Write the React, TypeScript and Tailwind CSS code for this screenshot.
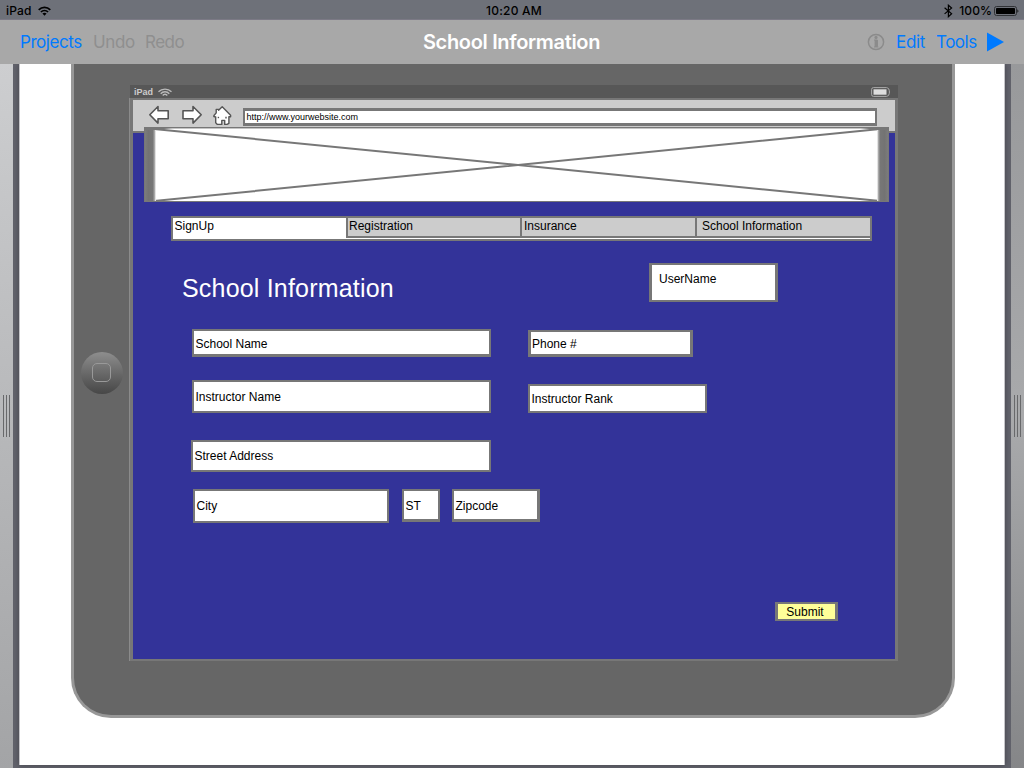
import React from "react";

function Field({ label, className, textClass = "" }: { label: string; className: string; textClass?: string }) {
  return (
    <div className={`flex shrink-0 items-center border-[#777] bg-white pl-[1.5px] text-[12px] leading-[14px] text-black ${className}`}>
      <span className={`whitespace-nowrap ${textClass}`}>{label}</span>
    </div>
  );
}

function StatusBar() {
  return (
    <div className="grid h-5 grid-cols-3 items-center border-b border-[#7b7985] bg-[#6e7179] text-[12px] font-medium leading-[18px] text-black">
      <div className="flex items-center gap-[6px] pl-[6px] pt-[2px]">
        <span className="tracking-[0.2px]">iPad</span>
        <svg width="13" height="10" viewBox="0 0 13 10" fill="none" stroke="#000" strokeWidth="1.7">
          <path d="M0.7 3.8C4 .5 9 .5 12.3 3.8M2.9 6C5 4 8 4 10.1 6" />
          <path d="M4.4 7.6C5.7 6.5 7.3 6.5 8.6 7.6L6.5 9.7Z" fill="#000" stroke="none" />
        </svg>
      </div>
      <div className="pl-[4px] pt-[2px] text-center tracking-[0.2px]">10:20 AM</div>
      <div className="flex items-center justify-end pr-[5px] pt-[2px]">
        <svg width="9" height="14" viewBox="0 0 9 14" fill="none" stroke="#000" strokeWidth="1.2">
          <path d="M.6 3.8L7.6 9.7L4.4 12.7V1.2L7.6 4L.6 9.9" />
        </svg>
        <span className="ml-[6px] tracking-[0.1px]">100%</span>
        <svg className="ml-[2px]" width="25" height="10" viewBox="0 0 25 10">
          <rect x=".5" y=".5" width="22" height="9" rx="2" fill="none" stroke="#303236" />
          <rect x="2" y="2" width="19" height="6" rx=".8" />
          <path d="M23.5 3.2Q25.2 5 23.5 6.8Z" />
        </svg>
      </div>
    </div>
  );
}

function NavBar() {
  return (
    <div className="relative z-10 grid h-11 grid-cols-[1fr_auto_1fr] items-center bg-[#a8a8a8] text-[17px] leading-5">
      <div className="flex gap-[11px] pl-5">
        <span className="w-[62px] whitespace-nowrap tracking-[-0.45px] text-[#007aff]">Projects</span>
        <span className="w-[41px] whitespace-nowrap tracking-[-0.4px] text-[#8f8f8f]">Undo</span>
        <span className="whitespace-nowrap tracking-[-0.5px] text-[#8f8f8f]">Redo</span>
      </div>
      <div className="whitespace-nowrap pr-px text-[20px] font-semibold tracking-[-0.33px] text-white">School Information</div>
      <div className="flex items-center justify-end pr-5 text-[#007aff]">
        <svg className="mb-px mr-[11px]" width="18" height="18" viewBox="0 0 18 18" fill="none" stroke="#8b8b8b">
          <circle cx="9" cy="9" r="7.6" strokeWidth="1.5" />
          <circle cx="9" cy="4.4" r="1.6" fill="#8b8b8b" stroke="none" />
          <path d="M7 7H10.4V13.5M7 14H11.4" strokeWidth="1" />
          <path d="M7.6 7H10.6V14H7.6Z" fill="#8b8b8b" stroke="none" />
        </svg>
        <span className="mr-[10px] w-[30px] tracking-[-0.3px]">Edit</span>
        <span className="mr-[11px] w-[40px] tracking-[-0.5px]">Tools</span>
        <svg width="17" height="20" viewBox="0 0 17 20"><path d="M0 .5L17 10L0 19.5Z" fill="#007aff" /></svg>
      </div>
    </div>
  );
}

function Grip() {
  return (
    <div className="flex h-[42px] gap-[2px]">
      <i className="w-px bg-[#68696b]" /><i className="w-px bg-[#68696b]" /><i className="w-px bg-[#68696b]" />
    </div>
  );
}

function BrowserBar() {
  return (
    <div className="flex h-[33px] border-b-2 border-[#777] bg-[#ccc] pl-4 pt-[5px]">
      <svg width="84" height="21" viewBox="149 105 84 21" fill="#fff" stroke="#555" strokeWidth="1.6" strokeLinejoin="round">
        <path d="M149.8 114.8L158 106.5V110.7H168.2V118.8H158V123.1Z" />
        <path d="M201.2 114.8L193 106.5V110.7H183V118.8H193V123.1Z" />
        <path strokeWidth="1.4" d="M214 115.5L216.2 112.9V109.4H218.6V110.2L222.2 106.7L230.6 115.2V116.8H228.9V123.4L227 124.4H224.7V120.4H221.8V124.4H217.4L215.7 122.8V117L213.8 116.5Z" />
        <path strokeWidth="1.4" d="M218.4 116.8V118.2" />
        <path strokeWidth="1.4" d="M226 116.8V118.4" />
      </svg>
      <div className="ml-[10px] mt-[3px] flex h-[18px] w-[634px] items-center border-x-2 border-y-[3px] border-[#777] bg-white pl-[1.5px] text-[9px] leading-[12px] text-black">
        <span className="whitespace-nowrap">http://www.yourwebsite.com</span>
      </div>
    </div>
  );
}

function Banner() {
  return (
    <div className="relative ml-[11px] mt-[-6px] h-[75px] w-[745px] border border-[#777] bg-white">
      <svg className="block" width="743" height="73" viewBox="145 128 743 73">
        <defs>
          <linearGradient id="edgeL"><stop offset="0" stopColor="#7c7c7c" /><stop offset=".3" stopColor="#737373" /><stop offset=".7" stopColor="#777" /><stop offset=".85" stopColor="#a0a0a0" /><stop offset="1" stopColor="#fff" /></linearGradient>
          <linearGradient id="edgeR" x1="1" x2="0"><stop offset="0" stopColor="#7c7c7c" /><stop offset=".3" stopColor="#737373" /><stop offset=".7" stopColor="#777" /><stop offset=".85" stopColor="#a0a0a0" /><stop offset="1" stopColor="#fff" /></linearGradient>
        </defs>
        <path d="M154 129L880 201M154 201L880 129" stroke="#777" strokeWidth="2" />
        <path d="M145 128.5H888" stroke="#c4c4c4" />
        <rect x="145" y="128" width="11" height="73" fill="url(#edgeL)" />
        <rect x="877" y="128" width="11" height="73" fill="url(#edgeR)" />
        <path d="M145 128H172L156 130H145ZM888 128H861L877 130H888Z" fill="#777" />
      </svg>
    </div>
  );
}

function Tabs() {
  return (
    <div className="ml-[38px] mt-[14px] flex h-[25px] w-[701px] border-2 border-[#777] bg-white text-[12px] leading-[16px] text-black">
      <div className="w-[173px] pl-[1.5px]">SignUp</div>
      <div className="h-[20px] w-[174px] border-b-2 border-l-2 border-[#777] bg-[#ccc] pl-px">Registration</div>
      <div className="h-[20px] w-[175px] border-b-2 border-l-2 border-[#777] bg-[#ccc] pl-[2px]">Insurance</div>
      <div className="h-[20px] flex-1 border-b-2 border-l-2 border-[#777] bg-[#ccc] pl-[5px]">School Information</div>
    </div>
  );
}

function Form() {
  return (
    <div className="flex flex-col">
      <div className="mt-[22px] flex h-[39px]">
        <h1 className="ml-[49px] mt-[9px] w-[467px] whitespace-nowrap text-[25px] leading-[32px] tracking-[0.19px] text-white">School Information</h1>
        <Field label="UserName" className="h-[39px] w-[129px] border-x-[3px] border-y-2 pb-[7px] pl-[7px]" />
      </div>
      <div className="ml-[59px] mt-[27px] flex h-[28px] items-end gap-[37px]">
        <Field label="School Name" className="h-[28px] w-[299px] border-2 border-b-[3px] pt-[2px]" />
        <Field label="Phone #" className="h-[27px] w-[165px] border-[3px] border-t-2 pl-px pt-[2px]" />
      </div>
      <div className="ml-[59px] mt-[23px] flex h-[33px] items-end gap-[37px]">
        <Field label="Instructor Name" className="h-[33px] w-[299px] border-2" />
        <Field label="Instructor Rank" className="h-[29px] w-[179px] border-2" />
      </div>
      <Field label="Street Address" className="ml-[58px] mt-[27px] h-[32px] w-[300px] border-2" />
      <div className="ml-[60px] mt-[17px] flex h-[34px] items-start">
        <Field label="City" className="h-[34px] w-[196px] border-2" />
        <Field label="ST" className="ml-[13px] h-[33px] w-[38px] border-2 border-b-[3px] pt-px" />
        <Field label="Zipcode" className="ml-[12px] h-[33px] w-[88px] border-2 border-b-[3px] border-r-[3px] pt-px" />
      </div>
      <button className="ml-[642px] mt-[79px] h-[19px] w-[63px] border-x-[3px] border-y-2 border-[#777] bg-[#ffff99] pr-[3px] pt-px text-[12px] leading-[14px] text-black">Submit</button>
    </div>
  );
}

function Device() {
  return (
    <div className="ml-[51px] flex h-[654px] w-[884px] rounded-b-[40px] border-[3px] border-t-0 border-[#989898] bg-[#666]">
      <div className="ml-[7px] mt-[288px] flex size-[42px] shrink-0 items-center justify-center rounded-full bg-linear-to-b from-[#8e8e8e] to-[#474747]">
        <div className="mb-px mr-px size-[19px] rounded-[5px] border border-[#999]" />
      </div>
      <div className="ml-[6px] mt-[21px] flex h-[576px] w-[769px] flex-col">
        <div className="ml-px flex h-[13px] shrink-0 items-center bg-[#575757] pl-1 pr-2 pt-px text-[9px] font-bold leading-[12px] text-[#ccc]">
          <span>iPad</span>
          <svg className="ml-[5px]" width="14" height="9" viewBox="0 0 14 9" fill="none" stroke="#bbb" strokeWidth="1.3">
            <path d="M.5 3.8C4 .2 10 .2 13.5 3.8M2.7 5.7C5 3.1 9 3.1 11.3 5.7M4.7 7.5C6 5.8 8 5.8 9.3 7.5" />
          </svg>
          <svg className="ml-auto" width="19" height="10" viewBox="0 0 19 10">
            <path d="M2.5 .6H15.5C19.4 .6 19.4 9.4 15.5 9.4H2.5Q.6 9.4 .6 7.5V2.5Q.6 .6 2.5 .6Z" fill="none" stroke="#aaa" />
            <rect x="2.5" y="2.3" width="13" height="5.4" fill="#ddd" />
          </svg>
        </div>
        <div className="flex flex-1 border-l border-[#8b8b8b]">
          <div className="flex-1 border-b-2 border-l-[3px] border-r-[3px] border-t-2 border-[#777] bg-[#333399]">
            <BrowserBar />
            <Banner />
            <Tabs />
            <Form />
          </div>
        </div>
      </div>
    </div>
  );
}

export default function App() {
  return (
    <div className="flex h-[768px] w-[1024px] flex-col overflow-hidden font-['Inter',sans-serif]">
      <StatusBar />
      <NavBar />
      <main className="flex h-[704px] bg-[#62636c] font-['Liberation_Sans',Arial,sans-serif]">
        <aside className="flex w-[13px] justify-end bg-linear-to-b from-[#cdced0] to-[#a3a4a6] pr-[3px] pt-[331px]"><Grip /></aside>
        <section className="ml-[6px] h-[701px] w-[986px] border-l border-r border-[#c5c5c9] bg-white shadow-[0_0_6px_#44444c]"><Device /></section>
        <aside className="relative ml-[6px] flex w-[13px] bg-linear-to-b from-[#98999b] via-[#a9aaac] to-[#858688] pl-[3px] pt-[331px]"><Grip /></aside>
      </main>
    </div>
  );
}
